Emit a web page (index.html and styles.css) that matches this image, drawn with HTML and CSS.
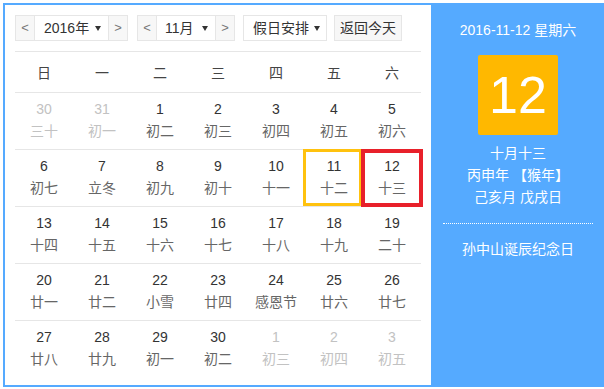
FILE: index.html
```html
<!DOCTYPE html>
<html lang="zh-CN">
<head>
<meta charset="utf-8">
<title>万年历</title>
<link rel="stylesheet" href="styles.css">
</head>
<body>
<div class="cal">
  <div class="main">
    <div class="toolbar">
      <div class="group">
        <span class="btn arrow">&lt;</span>
        <span class="sel year">2016年<i class="tri"></i></span>
        <span class="btn arrow">&gt;</span>
      </div>
      <div class="group">
        <span class="btn arrow">&lt;</span>
        <span class="sel month">11月<i class="tri"></i></span>
        <span class="btn arrow">&gt;</span>
      </div>
      <div class="group">
        <span class="sel holiday">假日安排<i class="tri"></i></span>
      </div>
      <div class="group">
        <span class="btn today">返回今天</span>
      </div>
    </div>
    <div class="grid">
      <div class="week">
        <span>日</span><span>一</span><span>二</span><span>三</span><span>四</span><span>五</span><span>六</span>
      </div>
      <div class="row">
        <div class="day other"><b>30</b><em>三十</em></div>
        <div class="day other"><b>31</b><em>初一</em></div>
        <div class="day"><b>1</b><em>初二</em></div>
        <div class="day"><b>2</b><em>初三</em></div>
        <div class="day"><b>3</b><em>初四</em></div>
        <div class="day"><b>4</b><em>初五</em></div>
        <div class="day"><b>5</b><em>初六</em></div>
      </div>
      <div class="row">
        <div class="day"><b>6</b><em>初七</em></div>
        <div class="day"><b>7</b><em>立冬</em></div>
        <div class="day"><b>8</b><em>初九</em></div>
        <div class="day"><b>9</b><em>初十</em></div>
        <div class="day"><b>10</b><em>十一</em></div>
        <div class="day hover"><b>11</b><em>十二</em></div>
        <div class="day current"><b>12</b><em>十三</em></div>
      </div>
      <div class="row">
        <div class="day"><b>13</b><em>十四</em></div>
        <div class="day"><b>14</b><em>十五</em></div>
        <div class="day"><b>15</b><em>十六</em></div>
        <div class="day"><b>16</b><em>十七</em></div>
        <div class="day"><b>17</b><em>十八</em></div>
        <div class="day"><b>18</b><em>十九</em></div>
        <div class="day"><b>19</b><em>二十</em></div>
      </div>
      <div class="row">
        <div class="day"><b>20</b><em>廿一</em></div>
        <div class="day"><b>21</b><em>廿二</em></div>
        <div class="day"><b>22</b><em>小雪</em></div>
        <div class="day"><b>23</b><em>廿四</em></div>
        <div class="day"><b>24</b><em>感恩节</em></div>
        <div class="day"><b>25</b><em>廿六</em></div>
        <div class="day"><b>26</b><em>廿七</em></div>
      </div>
      <div class="row">
        <div class="day"><b>27</b><em>廿八</em></div>
        <div class="day"><b>28</b><em>廿九</em></div>
        <div class="day"><b>29</b><em>初一</em></div>
        <div class="day"><b>30</b><em>初二</em></div>
        <div class="day other"><b>1</b><em>初三</em></div>
        <div class="day other"><b>2</b><em>初四</em></div>
        <div class="day other"><b>3</b><em>初五</em></div>
      </div>
    </div>
  </div>
  <div class="side">
    <div class="side-date">2016-11-12 星期六</div>
    <div class="big-day">12</div>
    <div class="lunar">
      <p>十月十三</p>
      <p>丙申年 【猴年】</p>
      <p>己亥月 戊戌日</p>
    </div>
    <div class="festival">孙中山诞辰纪念日</div>
  </div>
</div>
</body>
</html>
```

FILE: styles.css
```css
html, body {
  margin: 0;
  padding: 0;
  overflow: hidden;
  background: #fff;
}

body {
  font-family: "Liberation Sans", "Noto Sans CJK SC", sans-serif;
  font-size: 14px;
  color: #333;
}

.cal {
  box-sizing: border-box;
  margin: 3px 0 0 3px;
  width: 604px;
  height: 384px;
  border: 2px solid #55aaff;
  display: flex;
}

.main {
  width: 426px;
  padding: 10px;
  box-sizing: border-box;
  background: #fff;
  flex: none;
}

.toolbar {
  display: flex;
  height: 26px;
  margin-bottom: 10px;
  gap: 9px;
}

.group {
  display: flex;
  height: 26px;
}

.group:nth-child(3) { margin-left: -1px; }
.group:nth-child(4) { margin-left: -2px; }

.btn, .sel {
  box-sizing: border-box;
  height: 26px;
  border: 1px solid #e6e6e6;
  display: flex;
  align-items: center;
  line-height: 24px;
}

.btn {
  background: #f7f7f7;
  color: #777;
}

.arrow {
  width: 20px;
  justify-content: center;
  font-size: 13px;
}

.group .sel {
  border-left: none;
  border-right: none;
}

.sel {
  background: #fff;
  color: #333;
  justify-content: space-between;
  padding: 0 7px 0 9px;
}

.holiday.sel {
  border: 1px solid #e6e6e6;
  width: 84px;
  padding-right: 6px;
}

.year { width: 73px; }
.month { width: 58px; padding-left: 8px; }

.tri {
  display: block;
  width: 0;
  height: 0;
  border-left: 3.5px solid transparent;
  border-right: 3.5px solid transparent;
  border-top: 5px solid #333;
}

.today {
  width: 68px;
  justify-content: center;
  color: #333;
}

.grid {
  border-top: 1px solid #e6e6e6;
}

.week {
  display: grid;
  grid-template-columns: repeat(7, 58px);
  height: 40px;
  border-bottom: 1px solid #e6e6e6;
  align-items: center;
  text-align: center;
  color: #444;
}

.row {
  display: grid;
  grid-template-columns: repeat(7, 58px);
  height: 56px;
  border-bottom: 1px solid #e6e6e6;
}

.row:last-child {
  border-bottom: none;
}

.day {
  position: relative;
  display: flex;
  flex-direction: column;
  align-items: center;
  padding-top: 5px;
}

.day b {
  font-weight: normal;
  line-height: 22px;
  color: #333;
}

.day em {
  font-style: normal;
  line-height: 23px;
  color: #666;
}

.day.other b,
.day.other em {
  color: #c2c2c2;
}

.day.hover::after,
.day.current::after {
  content: "";
  position: absolute;
  box-sizing: border-box;
}

.day.hover::after {
  left: -2px;
  right: 1px;
  top: -1px;
  bottom: 0;
  border: 3px solid #ffc20e;
}

.day.current::after {
  left: -2px;
  right: -2px;
  top: -1px;
  bottom: -1px;
  border: 4px solid #e8202a;
  z-index: 1;
}

.side {
  flex: 1;
  background: #55aaff;
  color: #fff;
  display: flex;
  flex-direction: column;
  align-items: center;
  padding-top: 15px;
  box-sizing: border-box;
}

.side-date {
  line-height: 20px;
}

.big-day {
  margin-top: 15px;
  width: 80px;
  height: 80px;
  border-radius: 2px;
  background: #ffb800;
  color: #fff;
  font-size: 52px;
  line-height: 80px;
  text-align: center;
}

.lunar {
  margin-top: 7px;
  width: 150px;
  padding-bottom: 15px;
  border-bottom: 1px dotted #fff;
  text-align: center;
}

.lunar p {
  margin: 0;
  line-height: 22px;
}

.festival {
  padding-top: 14px;
  line-height: 22px;
}
```
